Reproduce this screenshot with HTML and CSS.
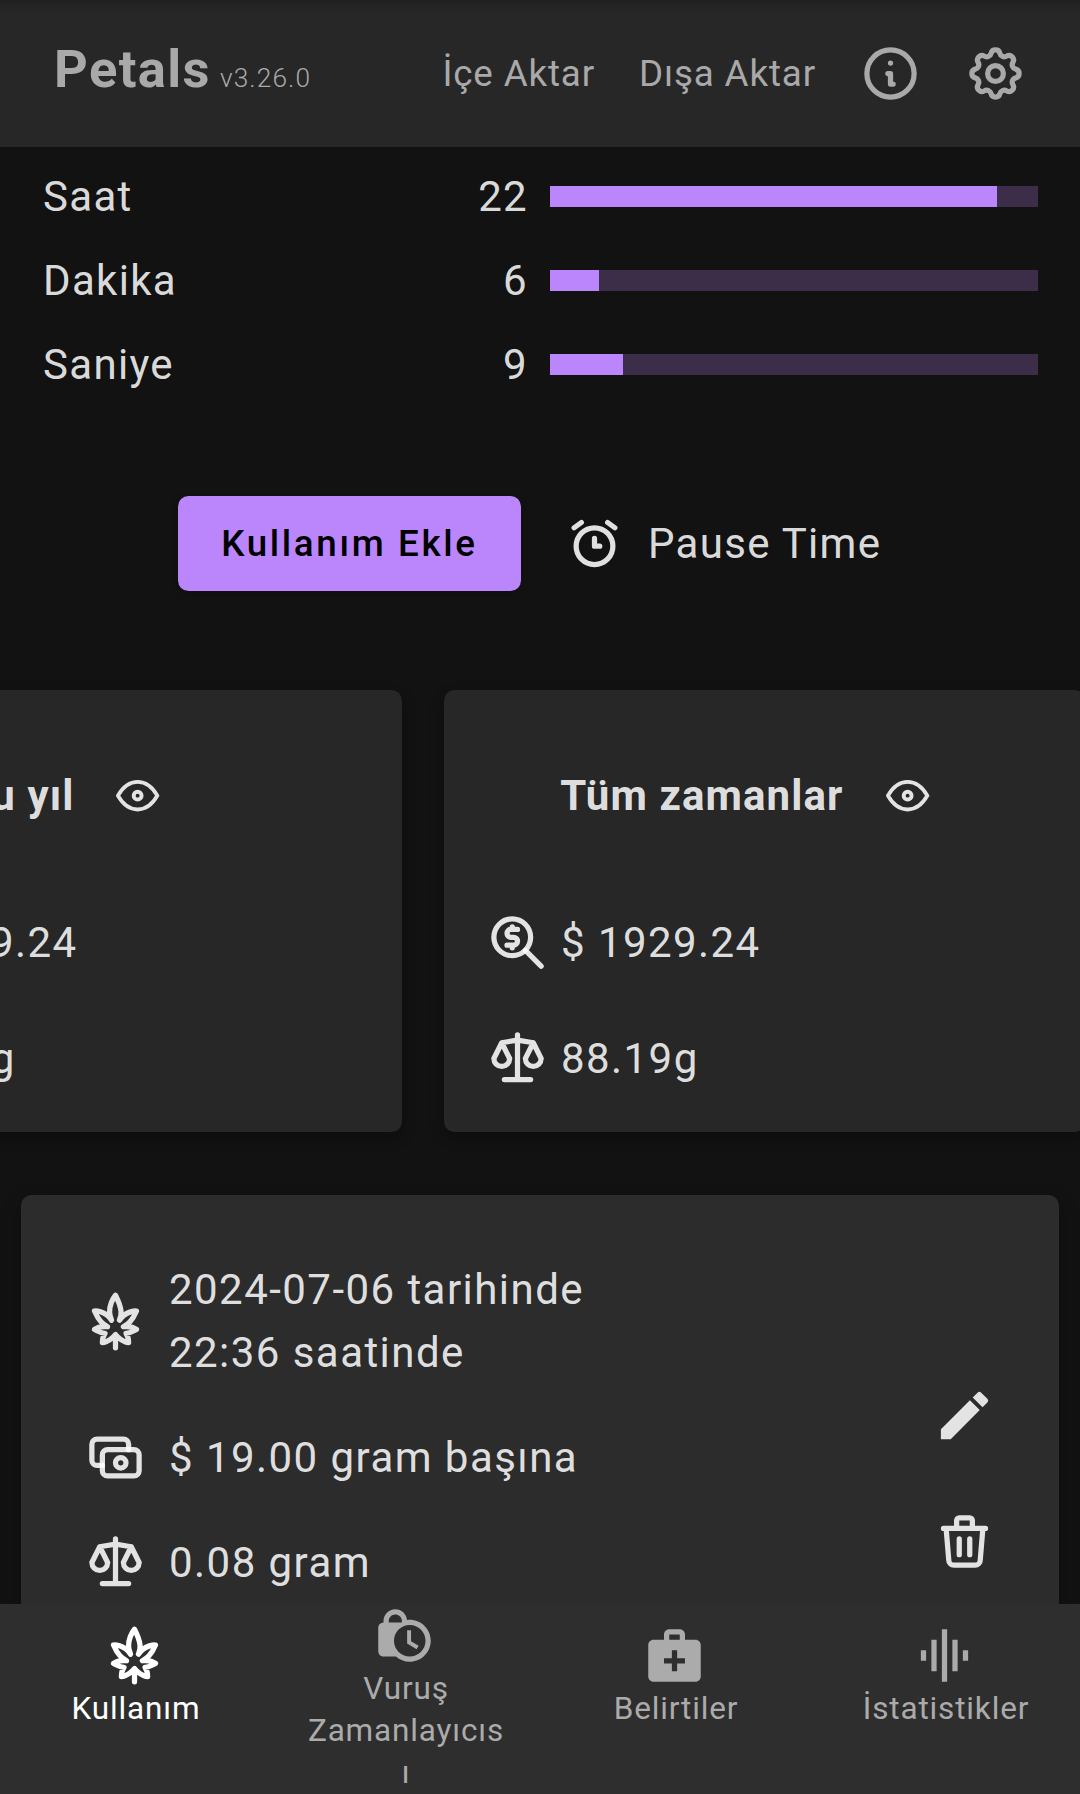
FILE: index.html
```html
<!DOCTYPE html>
<html lang="tr">
<head>
<meta charset="utf-8">
<title>Petals</title>
<link rel="stylesheet" href="styles.css">
</head>
<body>
<svg class="sprite" aria-hidden="true">
  <symbol id="scale" viewBox="0 0 24 24"><path d="M7 20h10M6 6l6-1 6 1M12 3v17M9 12 6 6l-3 6a3 3 0 0 0 6 0M21 12l-3-6-3 6a3 3 0 0 0 6 0"/></symbol>
  <symbol id="zoom-money" viewBox="0 0 24 24"><circle cx="10" cy="10" r="7"/><path d="m21 21-6-6M12 7H9.500a1.500 1.500 0 0 0 0 3h1a1.500 1.500 0 0 1 0 3H8M10 13v1M10 6v1"/></symbol>
  <symbol id="eye" viewBox="0 0 24 24"><circle cx="12" cy="12" r="2"/><path d="M22 12c-2.667 4.667-6 7-10 7s-7.333-2.333-10-7c2.667-4.667 6-7 10-7s7.333 2.333 10 7"/></symbol>
  <symbol id="leaf" viewBox="0 0 24 24"><path d="M7 20s0-2 1-3.500C6.500 16.500 6 16 4 15c0 0 1.839-1.380 5-1-1.789-.970-3.279-2.030-5-6 0 0 3.980-.300 6.500 3.500C8.216 6.500 12 2 12 2c2.734 5.470 2.389 7.500 1.500 9.500C16.031 7.730 20 8 20 8c-1.721 3.970-3.211 5.030-5 6 3.161-.380 5 1 5 1-2 1-2.500 1.500-4 1.500 1 1.500 1 3.500 1 3.500-2 0-4.438-2.220-5-3-.563.780-3 3-5 3zM12 22v-5"/></symbol>
</svg>
<div class="app">
  <header class="topbar">
    <div class="brand"><span class="brand-name">Petals</span><span class="brand-version">v3.26.0</span></div>
    <nav class="topbar-actions">
      <a class="import">İçe Aktar</a>
      <a class="export">Dışa Aktar</a>
      <svg class="icon info" viewBox="0 0 24 24"><circle cx="12" cy="12" r="9"/><path d="M12 8h.01M11 12h1v4h1"/></svg>
      <svg class="icon" viewBox="0 0 24 24"><path d="M10.325 4.317c.426-1.756 2.924-1.756 3.350 0a1.724 1.724 0 0 0 2.573 1.066c1.543-.940 3.310.826 2.370 2.370a1.724 1.724 0 0 0 1.065 2.572c1.756.426 1.756 2.924 0 3.350a1.724 1.724 0 0 0-1.066 2.573c.940 1.543-.826 3.310-2.370 2.370a1.724 1.724 0 0 0-2.572 1.065c-.426 1.756-2.924 1.756-3.350 0a1.724 1.724 0 0 0-2.573-1.066c-1.543.940-3.310-.826-2.370-2.370a1.724 1.724 0 0 0-1.065-2.572c-1.756-.426-1.756-2.924 0-3.350a1.724 1.724 0 0 0 1.066-2.573c-.940-1.543.826-3.310 2.370-2.370 1 .608 2.296.070 2.572-1.065z"/><circle cx="12" cy="12" r="3"/></svg>
    </nav>
  </header>

  <main class="content">
    <section class="timer">
      <div class="timer-row"><span>Saat</span><span class="count">22</span><div class="bar"><div class="bar-fill" style="width:91.667%"></div></div></div>
      <div class="timer-row"><span>Dakika</span><span class="count">6</span><div class="bar"><div class="bar-fill" style="width:10%"></div></div></div>
      <div class="timer-row"><span>Saniye</span><span class="count">9</span><div class="bar"><div class="bar-fill" style="width:15%"></div></div></div>
    </section>

    <section class="actions">
      <button class="add-button">Kullanım Ekle</button>
      <div class="pause">
        <svg class="icon" viewBox="0 0 24 24"><circle cx="12" cy="13" r="7"/><path d="M12 10v3h2M7 4 4.250 6M17 4l2.750 2"/></svg>
        <span>Pause Time</span>
      </div>
    </section>

    <section class="stats">
      <article class="stat-card">
        <div class="stat-title"><h2>Bu yıl</h2><svg class="icon small"><use href="#eye"/></svg></div>
        <div class="stat-row"><svg class="icon"><use href="#zoom-money"/></svg><span>$ 1929.24</span></div>
        <div class="stat-row"><svg class="icon"><use href="#scale"/></svg><span>88.19g</span></div>
      </article>
      <article class="stat-card">
        <div class="stat-title"><h2>Tüm zamanlar</h2><svg class="icon small"><use href="#eye"/></svg></div>
        <div class="stat-row"><svg class="icon"><use href="#zoom-money"/></svg><span>$ 1929.24</span></div>
        <div class="stat-row"><svg class="icon"><use href="#scale"/></svg><span>88.19g</span></div>
      </article>
    </section>

    <article class="usage-card">
      <div class="usage-details">
        <div class="usage-row"><svg class="icon"><use href="#leaf"/></svg><span>2024-07-06 tarihinde<br>22:36 saatinde</span></div>
        <div class="usage-row"><svg class="icon" viewBox="0 0 24 24"><rect x="7" y="9" width="14" height="10" rx="2"/><circle cx="14" cy="14" r="2"/><path d="M17 9V7a2 2 0 0 0-2-2H5a2 2 0 0 0-2 2v6a2 2 0 0 0 2 2h2"/></svg><span>$ 19.00 gram başına</span></div>
        <div class="usage-row"><svg class="icon"><use href="#scale"/></svg><span>0.08 gram</span></div>
      </div>
      <div class="usage-tools">
        <svg class="icon filled" viewBox="0 0 24 24"><path d="M3 17.250V21h3.750L17.810 9.940l-3.750-3.750L3 17.250zM20.710 7.040a1 1 0 0 0 0-1.410l-2.340-2.340a1 1 0 0 0-1.410 0l-1.830 1.830 3.750 3.750 1.830-1.830z"/></svg>
        <svg class="icon" viewBox="0 0 24 24"><path d="M4 7h16M10 11v6M14 11v6M5 7l1 12a2 2 0 0 0 2 2h8a2 2 0 0 0 2-2l1-12M9 7V4a1 1 0 0 1 1-1h4a1 1 0 0 1 1 1v3"/></svg>
      </div>
    </article>
  </main>

  <nav class="tabbar">
    <a class="tab active"><svg class="icon"><use href="#leaf"/></svg><span>Kullanım</span></a>
    <a class="tab"><svg class="icon filled" viewBox="0 0 24 24"><path d="M14.500 14.200l2.900 1.700-.8 1.300L13 15v-5h1.500v4.200zM22 14c0 4.410-3.590 8-8 8-2.020 0-3.860-.760-5.270-2H4c-1.150 0-2-.850-2-2V9c0-1.120.890-1.960 2-2v-.5C4 4.010 6.010 2 8.500 2c2.340 0 4.240 1.790 4.460 4.080.340-.050.690-.080 1.040-.080 4.410 0 8 3.590 8 8zM6 7h5v-.740C10.880 4.990 9.800 4 8.500 4 7.120 4 6 5.120 6 6.500V7zm14 7c0-3.310-2.690-6-6-6s-6 2.690-6 6 2.690 6 6 6 6-2.690 6-6z"/></svg><span>Vuruş Zamanlayıcısı</span></a>
    <a class="tab"><svg class="icon filled" viewBox="0 0 24 24"><path d="M20 6h-4V4c0-1.100-.9-2-2-2h-4c-1.100 0-2 .9-2 2v2H4c-1.100 0-2 .9-2 2v12c0 1.100.9 2 2 2h16c1.100 0 2-.9 2-2V8c0-1.100-.9-2-2-2zM10 4h4v2h-4V4zm6 11h-3v3h-2v-3H8v-2h3v-3h2v3h3v2z"/></svg><span>Belirtiler</span></a>
    <a class="tab"><svg class="icon filled" viewBox="0 0 24 24"><path d="M7 18h2V6H7v12zm4 4h2V2h-2v20zm-8-8h2v-4H3v4zm12 4h2V6h-2v12zm4-8v4h2v-4h-2z"/></svg><span>İstatistikler</span></a>
  </nav>
</div>
</body>
</html>
```
FILE: styles.css
```css
* { box-sizing: border-box; }

body {
  margin: 0;
  background: #121212;
  color: rgba(255, 255, 255, 0.87);
  font: 400 42px/63px Roboto, "Noto Sans", sans-serif;
  letter-spacing: 1.3125px;
}

.sprite { display: none; }

.app {
  display: flex;
  flex-direction: column;
  height: 1794px;
  overflow: hidden;
}

.icon {
  display: block;
  flex: none;
  width: 63px;
  height: 63px;
  fill: none;
  stroke: currentColor;
  stroke-width: 2;
  stroke-linecap: round;
  stroke-linejoin: round;
}
.icon.small { width: 47.25px; height: 47.25px; }
.icon.filled { fill: currentColor; stroke: none; }

/* Top bar */
.topbar {
  display: flex;
  flex: none;
  align-items: center;
  justify-content: space-between;
  height: 147px;
  padding: 0 53px 0 54px;
  background: linear-gradient(#202020, #272727 14px);
  color: #a9a9a9;
}
.brand { display: flex; align-items: baseline; }
.brand-name { font-size: 52.5px; font-weight: 700; letter-spacing: 1.4px; }
.brand-version { margin-left: 9px; font-size: 26.25px; font-weight: 300; letter-spacing: 1.1px; }
.topbar-actions { display: flex; align-items: center; font-size: 36.75px; letter-spacing: 0.86px; }
.export { margin-left: 44px; }
.info { margin: 0 42px 0 43px; }

/* Main column */
.content { flex: 1; min-height: 0; overflow: hidden; padding-top: 18px; }

.timer { display: grid; gap: 21px; padding: 0 42px 0 43px; }
.timer-row {
  display: grid;
  grid-template-columns: 243px 242px 488px;
  align-items: center;
}
.count { text-align: right; }
.bar { height: 21px; margin-left: 22px; width: 488px; background: #3c2d49; }
.bar-fill { height: 100%; background: #bb86fc; }

.actions {
  display: flex;
  align-items: center;
  gap: 42px;
  margin-top: 100px;
  padding-left: 178px;
}
.add-button {
  width: 343px;
  height: 95px;
  padding: 0;
  border: 0;
  border-radius: 10.5px;
  background: #bb86fc;
  box-shadow: 0 3px 8px rgba(0, 0, 0, 0.2);
  color: #000;
  font: 500 36.75px/63px Roboto, sans-serif;
  letter-spacing: 2.65px;
}
.pause { display: flex; align-items: center; gap: 22px; }

.stats { display: flex; gap: 42px; margin: 99px 0 0 -239px; }
.stat-card {
  flex: none;
  width: 641px;
  height: 442px;
  padding: 74px 42px 42px;
  border-radius: 10.5px;
  background: #272727;
  box-shadow: 0 6px 14px rgba(0, 0, 0, 0.3);
  letter-spacing: 1.43px;
}
.stat-title {
  display: flex;
  align-items: center;
  justify-content: center;
  gap: 40px;
  margin-bottom: 84px;
  padding-right: 38px;
}
.stat-title h2 { margin: 0; font-size: 42px; font-weight: 700; letter-spacing: 1.12px; }
.stat-row { display: flex; align-items: center; gap: 12px; }
.stat-row + .stat-row { margin-top: 53px; }

.usage-card {
  display: flex;
  justify-content: space-between;
  margin: 63px 21px 0;
  padding: 63px;
  border-radius: 10.5px;
  background: #2c2c2c;
  box-shadow: 0 8px 20px rgba(0, 0, 0, 0.3);
  letter-spacing: 1.45px;
}
.usage-details { display: grid; gap: 42px; }
.usage-row { display: flex; align-items: center; gap: 22px; }
.usage-tools { display: grid; gap: 63px; align-content: start; padding-top: 126px; }

/* Bottom navigation */
.tabbar {
  display: grid;
  grid-template-columns: repeat(4, 1fr);
  align-items: start;
  flex: none;
  height: 190px;
  background: #2e2e2e;
}
.tab {
  display: flex;
  flex-direction: column;
  align-items: center;
  justify-content: center;
  gap: 1px;
  min-height: 146px;
  color: #ababab;
  font-size: 31.5px;
  line-height: 42px;
  letter-spacing: 0.85px;
  text-align: center;
}
.tab .icon { margin-right: 1px; }
.tab span { max-width: 204px; padding-left: 2px; overflow-wrap: anywhere; }
.tab.active { color: #fff; }
```
